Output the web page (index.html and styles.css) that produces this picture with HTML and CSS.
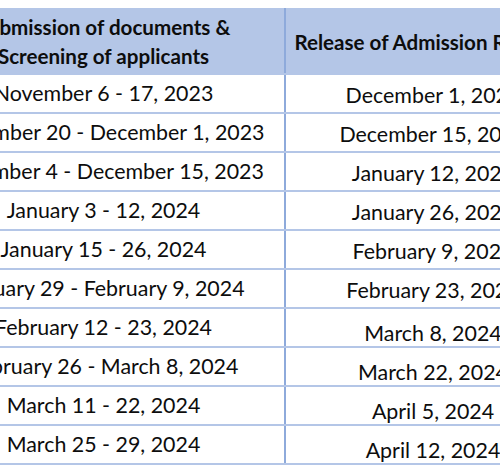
FILE: index.html
```html
<!DOCTYPE html>
<html>
<head>
<meta charset="utf-8">
<link rel="stylesheet" href="styles.css">
</head>
<body>
<div class="viewport">
  <table class="schedule">
    <colgroup><col class="c1"><col class="c2"></colgroup>
    <thead>
      <tr>
        <th>Submission of documents &amp;<br>Screening of applicants</th>
        <th class="single">Release of Admission Results</th>
      </tr>
    </thead>
    <tbody>
      <tr><td>November 6 - 17, 2023</td><td class="lo1">December 1, 2023</td></tr>
      <tr><td>November 20 - December 1, 2023</td><td class="lo1">December 15, 2023</td></tr>
      <tr><td>December 4 - December 15, 2023</td><td class="lo1">January 12, 2024</td></tr>
      <tr><td>January 3 - 12, 2024</td><td class="lo1">January 26, 2024</td></tr>
      <tr><td>January 15 - 26, 2024</td><td class="lo1">February 9, 2024</td></tr>
      <tr><td>January 29 - February 9, 2024</td><td class="lo1">February 23, 2024</td></tr>
      <tr><td>February 12 - 23, 2024</td><td class="lo2">March 8, 2024</td></tr>
      <tr><td>February 26 - March 8, 2024</td><td class="lo2">March 22, 2024</td></tr>
      <tr><td>March 11 - 22, 2024</td><td class="lo2">April 5, 2024</td></tr>
      <tr><td>March 25 - 29, 2024</td><td class="lo2">April 12, 2024</td></tr>
    </tbody>
  </table>
</div>
</body>
</html>
```

FILE: styles.css
```css
html, body {
  margin: 0;
  padding: 0;
  background: #ffffff;
}
.viewport {
  width: 500px;
  height: 472px;
  overflow: hidden;
  padding-top: 8px;
  box-sizing: border-box;
}
.schedule {
  width: 659px;
  margin-left: -79px;
  border-collapse: collapse;
  table-layout: fixed;
  font-family: Lato, "Open Sans", sans-serif;
  font-size: 21.4px;
  color: #0d0d0d;
}
.c1 { width: 363px; }
.c2 { width: 296px; }
.schedule th,
.schedule td {
  border: 2px solid #b4c6e7;
  border-left-color: #8eaadb;
  border-right-color: #8eaadb;
  text-align: center;
  white-space: nowrap;
  padding: 0;
}
.schedule th {
  background: #b4c6e7;
  font-weight: 700;
  font-size: 20.6px;
  height: 62px;
  line-height: 29px;
  padding-top: 1px;
}
.schedule th.single {
  text-indent: -13px;
}
.schedule td {
  line-height: 37px;
}
.schedule td.lo1 {
  padding-top: 3px;
  line-height: 34px;
}
.schedule td.lo2 {
  padding-top: 11px;
  line-height: 26px;
}
```
